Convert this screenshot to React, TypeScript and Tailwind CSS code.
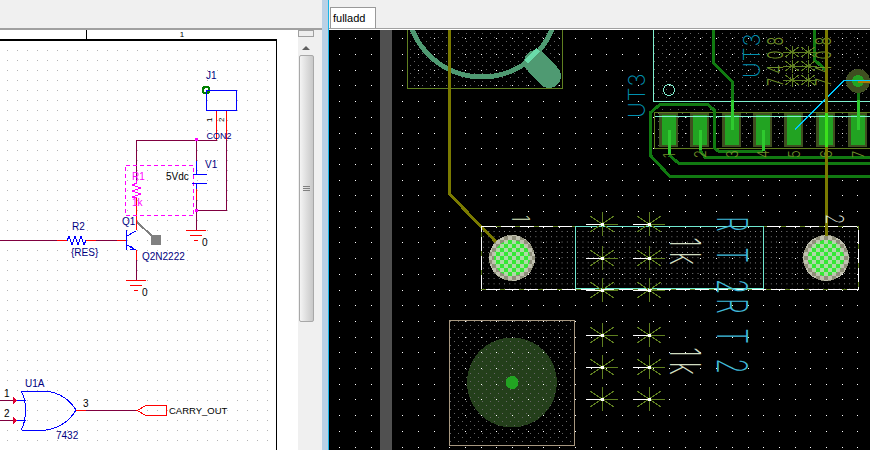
const mono = { fontFamily: '"Liberation Sans", sans-serif' };

// coarse board grid, every 15.7px
const gridX = Array.from({ length: 34 }, (_, i) => Math.round(339.3 + i * 15.7));
const gridY = Array.from({ length: 27 }, (_, i) => Math.round(38.3 + i * 15.7));

const padXs = [669, 700, 732, 763, 794, 826, 858];

const SchDots = () => (
  <>
    {Array.from({ length: 27 }).flatMap((_, i) =>
      Array.from({ length: 41 }).map((_, j) => (
        <rect key={`${i}-${j}`} x={7 + i * 10} y={50 + j * 10} width="1" height="1" fill="#b5b5b5" />
      ))
    )}
  </>
);

const Res = ({ d, color = '#0000ff' }: { d: string; color?: string }) => <path d={d} fill="none" stroke={color} strokeWidth="1" />;

const Ground = ({ x, y }: { x: number; y: number }) => (
  <path d={`M${x - 10} ${y}.5H${x + 10}M${x - 6} ${y + 5}.5H${x + 6}M${x - 2} ${y + 10}.5H${x + 2}`} stroke="#ff0000" fill="none" />
);

const Schematic = () => {
  return (
    <svg width="276" height="409" viewBox="0 41 276 409" className="block" style={mono} shapeRendering="crispEdges">
      <SchDots />
      {/* wires */}
      <path
        d="M136.5 180V140.5H216.5M196.5 140.5V161M226.5 140V210.5H196.5M196.5 200V230M0 240.5H57M96 240.5H117M136.5 260V280M86 410.5H137M0 400.5H13M0 420.5H13"
        fill="none"
        stroke="#800040"
      />
      {/* red pin stubs */}
      <path
        d="M216.5 110V140M226.5 110V140M196.5 189V200M136.5 197V230M57 240.5H67M86 240.5H96M117 240.5H126M136.5 250V260M76 410.5H86"
        fill="none"
        stroke="#ff0000"
      />
      <Res d="M67 240.5l2-4 3 8 3-8 3 8 3-8 3 8 2-4" color="#0000ff" />
      <path d="M136.5 180V183l-4 2 8 3-8 3 8 3-8 3 4 1" fill="none" stroke="#ff00ff" />
      <rect x="125.5" y="165.5" width="68" height="50" fill="none" stroke="#ff00ff" strokeDasharray="4 3" />
      <rect x="195" y="138" width="3" height="3" fill="#ff00ff" />
      <rect x="195" y="209" width="3" height="3" fill="#ff00ff" />

      {/* J1 */}
      <circle cx="206" cy="90" r="3.2" fill="none" stroke="#008000" strokeWidth="2.4" />
      <rect x="206.5" y="90.5" width="30" height="20" fill="none" stroke="#0000ff" />
      <text x="206" y="79" fontSize="10" fill="#000080">J1</text>
      <text transform="translate(212 122) rotate(-90)" fontSize="8" fill="#000">1</text>
      <text transform="translate(224 122) rotate(-90)" fontSize="8" fill="#000">2</text>
      <text x="206.5" y="139" fontSize="9" fill="#000080">CON2</text>

      {/* V1 */}
      <Res d="M196.5 161V174M192.5 174.5H206.5M192 183.5H207M196.5 184V189" />
      <text x="205" y="168" fontSize="10" fill="#000080">V1</text>
      <text x="166" y="180" fontSize="10" fill="#000">5Vdc</text>
      <Ground x={196} y={230} />
      <text x="202" y="246" fontSize="10" fill="#000">0</text>

      {/* R1, R2 */}
      <text x="132" y="180" fontSize="10" fill="#ff00ff">R1</text>
      <text x="132" y="206" fontSize="10" fill="#ff00ff">1k</text>
      <text x="72" y="230" fontSize="10" fill="#000080">R2</text>
      <text x="71" y="256" fontSize="10" fill="#000080">{'{RES}'}</text>

      {/* Q1 */}
      <text x="122" y="225" fontSize="10" fill="#000080">Q1</text>
      <text x="142" y="260" fontSize="10" fill="#000080">Q2N2222</text>
      <Res d="M126.5 230V250M127 236L136 231M127 245L136 250M131 246l3 3-4 0" />
      <path d="M137 222L152 236" stroke="#808080" strokeWidth="2" />
      <rect x="151" y="235" width="10" height="10" fill="#808080" />
      <Ground x={136} y={280} />
      <text x="142" y="296" fontSize="10" fill="#000">0</text>

      {/* U1A */}
      <Res d="M22 391H46C60 393 70 400 76 410C70 420 60 428 46 430H22M21 391C27 400 27 420 21 430M13 400.5H26M13 420.5H26" />
      <path d="M13 397l4 3.5-4 3.5zM13 417l4 3.5-4 3.5z" fill="#e00030" />
      <text x="25" y="387" fontSize="10" fill="#000080">U1A</text>
      <text x="4" y="397" fontSize="10" fill="#000">1</text>
      <text x="4" y="417" fontSize="10" fill="#000">2</text>
      <text x="83" y="407" fontSize="10" fill="#000">3</text>
      <text x="56" y="439" fontSize="10" fill="#000080">7432</text>
      <path d="M137 410.5L146 405.5H166.5V415.5H146Z" fill="none" stroke="#ff0000" />
      <text x="169" y="414" fontSize="9.5" fill="#000">CARRY_OUT</text>
    </svg>
  );
};

const Spoke = ({ x, y }: { x: number; y: number }) => (
  <g fill="none">
    <path d={`M${x - 12} ${y - 8}L${x + 12} ${y + 8}M${x - 12} ${y + 8}L${x + 12} ${y - 8}M${x}.5 ${y - 12}V${y + 12}`} stroke="#5f7f20" />
    <path d={`M${x - 16} ${y}.5H${x}`} stroke="#ffffff" />
    <path d={`M${x} ${y}.5H${x + 16}`} stroke="#5f7f20" />
    <rect x={x - 1} y={y - 1} width="3" height="3" fill="#ffffff" stroke="none" />
  </g>
);

// stroke-font look: tall narrow thin lettering turned on its side
const Silk = ({ x, y, size, rot, color, sx = 0.6, ls = 0, weight = 200, children }: { x: number; y: number; size: number; rot: number; color: string; sx?: number; ls?: number; weight?: number; children: string }) => (
  <text
    transform={`translate(${x} ${y}) rotate(${rot}) scale(${sx} 1)`}
    fontSize={size}
    fontWeight={weight}
    letterSpacing={ls}
    fill={color}
    style={{ fontFamily: 'Inter, sans-serif' }}
  >
    {children}
  </text>
);

const Pad = ({ x }: { x: number }) => (
  <g>
    <circle cx={x} cy="258" r="23" fill="url(#ringCheck)" />
    <circle cx={x} cy="258" r="18" fill="url(#greenCheck)" />
  </g>
);

const Board = () => (
  <svg width="541" height="420" viewBox="329 30 541 420" className="block bg-black" shapeRendering="crispEdges">
    <defs>
      <pattern id="ringCheck" width="8" height="8" patternUnits="userSpaceOnUse">
        <rect width="8" height="8" fill="#8f8f7a" />
        <rect width="4" height="4" fill="#c0c0b0" />
        <rect x="4" y="4" width="4" height="4" fill="#c0c0b0" />
      </pattern>
      <pattern id="greenCheck" width="8" height="8" patternUnits="userSpaceOnUse">
        <rect width="8" height="8" fill="#35e835" />
        <rect width="4" height="4" fill="#b0d8a8" />
        <rect x="4" y="4" width="4" height="4" fill="#b0d8a8" />
      </pattern>
      <pattern id="fine" x="2" y="1" width="5.23" height="5.23" patternUnits="userSpaceOnUse">
        <rect width="1" height="1" fill="#a0a0a0" />
      </pattern>
      <pattern id="fineDim" x="2" y="1" width="8" height="8" patternUnits="userSpaceOnUse">
        <rect width="1" height="1" fill="#666666" />
        <rect x="4" y="4" width="1" height="1" fill="#666666" />
      </pattern>
    </defs>

    {/* hole footprint circle sits under the dots */}
    <circle cx="512" cy="382.5" r="45" fill="#243f1b" />

    {/* footprint fill dots */}
    <rect x="407" y="30" width="155" height="58" fill="url(#fineDim)" />
    <rect x="654" y="30" width="216" height="118" fill="url(#fineDim)" />
    <rect x="482" y="227" width="376" height="62" fill="url(#fine)" />
    <rect x="450" y="321" width="125" height="124" fill="url(#fineDim)" />

    {gridX.flatMap((x) =>
      gridY.map((y) => <rect key={`${x}-${y}`} x={x} y={y} width="1" height="1" fill="#ffffff" />)
    )}

    <rect x="380" y="30" width="12" height="420" fill="#505050" />

    {/* top left footprint */}
    <path d="M407.5 30V88.5H562.5V30" fill="none" stroke="#5f7f20" />
    <circle cx="482" cy="2" r="75" fill="none" stroke="#4f9a72" strokeWidth="5" />
    <path d="M536 62L549 76" stroke="#4f9a72" strokeWidth="24" strokeLinecap="round" />
    <path d="M526 62L538 50" stroke="#6adcaa" strokeWidth="5" />

    {/* IC pads */}
    {padXs.map((x) => (
      <g key={x}>
        <rect x={x - 10} y="113" width="19" height="34" fill="#3f4f20" />
        <rect x={x - 7} y="115" width="14" height="30" fill="#22a322" />
      </g>
    ))}
    <path d="M653.5 30V101.5H870M653.5 116.5H870" fill="none" stroke="#80f0d0" />
    <path d="M870 112.5H654V148.5H870" fill="none" stroke="#5f7f20" />
    <circle cx="669" cy="90" r="5.5" fill="none" stroke="#80f0d0" />

    {/* copper */}
    <path
      d="M713.5 30V63L732.5 82V130M814.5 30V60L826 70M650 155V113L660 104.5H708L714 110V148L719 151.5H763M650 155L670 176.5H870M669 155L679 163.5H870M700 150L705 157.5H870M858 80V130"
      fill="none"
      stroke="#117a11"
      strokeWidth="3"
    />
    <path d="M669 130V155M700 130V150M732.5 100V130M763 130V151M858 100V130" fill="none" stroke="#2ec92e" strokeWidth="3" />
    <circle cx="858" cy="81" r="12" fill="#3f4f20" />
    <circle cx="858" cy="81" r="6" fill="#22a322" />
    <path d="M858 81H870" stroke="#aa7a00" strokeWidth="3" />
    <path d="M795 129.5L844 80.5H870" fill="none" stroke="#00c8ff" />

    {/* top silk */}
    <Silk x={645} y={118} size={23} rot={-90} color="#0090b0" sx={0.95} ls={1}>UT3</Silk>
    <Silk x={760} y={78} size={23} rot={-90} color="#0090b0" sx={0.95} ls={1}>UT3</Silk>
    <Silk x={783} y={86} size={22} rot={-90} color="#6f8f28" sx={0.65} ls={8} weight={300}>7408</Silk>
    <Silk x={831} y={86} size={22} rot={-90} color="#6f8f28" sx={0.65} ls={8} weight={300}>7408</Silk>
    {[792, 808].flatMap((x) =>
      [52, 66, 80].map((y) => (
        <g key={`${x}-${y}`} fill="none" stroke="#5f7f20">
          <path d={`M${x - 9} ${y}.5H${x + 9}M${x}.5 ${y - 6}V${y + 7}M${x - 7} ${y - 5}L${x + 7} ${y + 5}M${x - 7} ${y + 5}L${x + 7} ${y - 5}`} />
        </g>
      ))
    )}
    {padXs.map((x, i) => (
      <Silk key={x} x={x + 6} y={158} size={16} rot={-90} color="#6f8f28" sx={0.8} weight={300}>{String(i + 1)}</Silk>
    ))}

    {/* yellow traces */}
    <path d="M449.5 30V194L497 243" fill="none" stroke="#7a7a00" strokeWidth="3" />
    <path d="M826.5 30V240" fill="none" stroke="#7a7a00" strokeWidth="3" />
    <path d="M826.5 113V147" stroke="#3ce01c" strokeWidth="3" />

    {/* R1 footprint */}
    <Pad x={512} />
    <Pad x={826} />
    <rect x="481.5" y="226.5" width="377" height="62.5" fill="none" stroke="#5f7f20" />
    <rect x="481.5" y="226.5" width="377" height="62.5" fill="none" stroke="#ffffff" strokeDasharray="14 5" />
    <rect x="575.5" y="226.5" width="188" height="62" fill="none" stroke="#70e8d0" />
    <path d="M826.5 205V236" stroke="#7a7a00" strokeWidth="3" />

    {[602, 649].flatMap((x) => [224, 258, 290, 335, 367, 399].map((y) => <Spoke key={`${x}-${y}`} x={x} y={y} />))}

    <Silk x={512} y={215} size={24} rot={90} color="#d8e8c0" sx={0.7} weight={200}>1</Silk>
    <Silk x={826} y={214} size={24} rot={90} color="#e8f0e0" sx={0.7} weight={200}>2</Silk>
    <Silk x={670} y={237} size={42} rot={90} color="#d0dcc0" sx={0.62} ls={8} weight={200}>1k</Silk>
    <Silk x={670} y={347} size={42} rot={90} color="#d0dcc0" sx={0.62} ls={8} weight={200}>1k</Silk>
    <Silk x={717} y={216} size={42} rot={90} color="#40b8d8" sx={0.6} ls={26} weight={200}>RT2</Silk>
    <Silk x={717} y={298} size={42} rot={90} color="#40b8d8" sx={0.6} ls={24} weight={200}>RT2</Silk>

    {/* hole footprint */}
    <rect x="449.5" y="320.5" width="125" height="125" fill="none" stroke="#a89880" />
    <circle cx="512" cy="382.5" r="6.5" fill="#22a322" />
  </svg>
);

export default function App() {
  return (
    <div className="flex h-[450px] w-[870px] overflow-hidden bg-[#f0f0f0]">
      <div className="flex w-[322px] flex-col">
        <div className="h-[30px] border-b-2 border-[#a0a0a0]" />
        <div className="flex min-h-0 flex-1">
          <div className="w-[298px] bg-white">
            <div className="flex h-[11px] w-[277px] border-b-2 border-black text-[8px] leading-[9px]">
              <div className="w-[87px] border-r border-black" />
              <div className="flex-1 text-center" style={mono}>1</div>
            </div>
            <div className="w-[277px] border-r border-black">
              <Schematic />
            </div>
          </div>
          <div className="flex w-[16px] flex-col items-center bg-[#f0f0f0]">
            <div className="h-[7px] w-full border border-[#a0a0a0] bg-[#eeeeee]" />
            <div className="flex h-[18px] items-center justify-center">
              <div className="mt-1 h-0 w-0 border-x-[4px] border-b-[4px] border-x-transparent border-b-[#606060]" />
            </div>
            <div className="flex h-[267px] w-[15px] flex-col items-center justify-center gap-[1px] rounded-[2px] border border-[#a8a8a8] bg-gradient-to-r from-[#f4f4f4] to-[#c8c8c8]">
              <div className="h-px w-[7px] bg-[#808080]" />
              <div className="h-px w-[7px] bg-[#808080]" />
              <div className="h-px w-[7px] bg-[#808080]" />
            </div>
          </div>
        </div>
      </div>
      <div className="w-[6px] bg-[#b9d1e6]" />
      <div className="w-px bg-[#19b5e6]" />
      <div className="flex w-[541px] flex-col">
        <div className="flex h-[29px] items-end border-b border-[#a0a0a0] pl-px">
          <div className="flex h-[21px] w-[46px] items-center border border-b-0 border-[#999999] bg-white pl-[2px] text-[11px] text-black" style={mono}>
            fulladd
          </div>
        </div>
        <div className="h-px bg-white" />
        <Board />
      </div>
    </div>
  );
}
